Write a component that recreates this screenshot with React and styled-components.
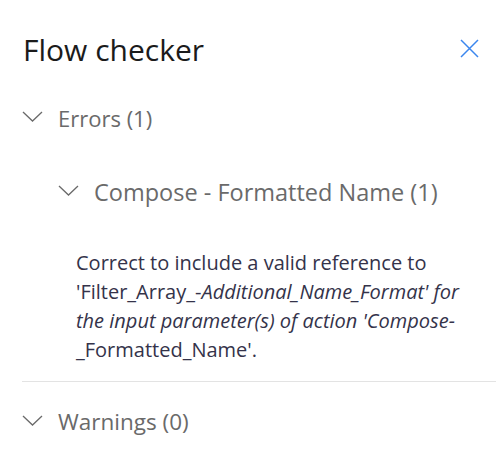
import React from "react";
import styled, { createGlobalStyle } from "styled-components";

const GlobalStyle = createGlobalStyle`
  html, body {
    margin: 0;
    padding: 0;
    background: #ffffff;
  }
  body {
    font-family: "Open Sans", "Noto Sans", sans-serif;
  }
`;

const Panel = styled.div`
  display: flex;
  flex-direction: column;
  width: 500px;
  height: 462px;
  box-sizing: border-box;
  padding: 32px 4px 0 22px;
  background: #ffffff;
  overflow: hidden;
`;

const HeaderRow = styled.div`
  display: flex;
  align-items: center;
  justify-content: space-between;
  padding-right: 17px;
`;

const Title = styled.h1`
  margin: 0;
  font-size: 30px;
  line-height: 36px;
  font-weight: 400;
  color: #1b1b1b;
  padding-left: 1px;
`;

const CloseButton = styled.button`
  display: flex;
  align-items: center;
  justify-content: center;
  width: 20px;
  height: 20px;
  padding: 0;
  border: none;
  background: none;
  cursor: pointer;
  margin-top: -4px;
`;

const SectionRow = styled.div`
  display: flex;
  align-items: center;
  gap: 15px;
  height: 30px;
  margin-top: ${(p) => p.$top}px;
  padding-left: ${(p) => p.$indent || 0}px;
`;

const SectionLabel = styled.span`
  font-size: ${(p) => p.$size || 22}px;
  line-height: 30px;
  color: #6a6a6a;
`;

const Message = styled.p`
  margin: 41px 0 0 54px;
  font-size: 20px;
  line-height: 29px;
  color: #34334a;
  max-width: 404px;
`;

const Em = styled.em`
  font-style: italic;
`;

const Divider = styled.hr`
  margin: 17px 0 0;
  border: none;
  border-top: 1px solid #e3e3e3;
`;

const Chevron = () => (
  <svg width="21" height="11" viewBox="0 0 21 11" style={{ marginTop: -4 }}>
    <polyline
      points="1,1 10.5,10 20,1"
      fill="none"
      stroke="#6a6a6a"
      strokeWidth="1.3"
    />
  </svg>
);

const CloseIcon = () => (
  <svg width="19" height="19" viewBox="0 0 19 19">
    <path
      d="M1 1 L18 18 M18 1 L1 18"
      stroke="#3b86ee"
      strokeWidth="1.5"
      fill="none"
    />
  </svg>
);

const App = () => {
  return (
    <>
      <GlobalStyle />
      <Panel>
        <HeaderRow>
          <Title>Flow checker</Title>
          <CloseButton aria-label="Close">
            <CloseIcon />
          </CloseButton>
        </HeaderRow>

        <SectionRow $top={35}>
          <Chevron />
          <SectionLabel>Errors (1)</SectionLabel>
        </SectionRow>

        <SectionRow $top={44} $indent={36}>
          <Chevron />
          <SectionLabel $size={23.5}>Compose - Formatted Name (1)</SectionLabel>
        </SectionRow>

        <Message>
          Correct to include a valid reference to 'Filter_Array_-
          <Em>Additional_Name_Format' for the input parameter(s) of action 'Compose-</Em>
          _Formatted_Name'.
        </Message>

        <Divider />

        <SectionRow $top={25}>
          <Chevron />
          <SectionLabel $size={22.5}>Warnings (0)</SectionLabel>
        </SectionRow>
      </Panel>
    </>
  );
};

export default App;
